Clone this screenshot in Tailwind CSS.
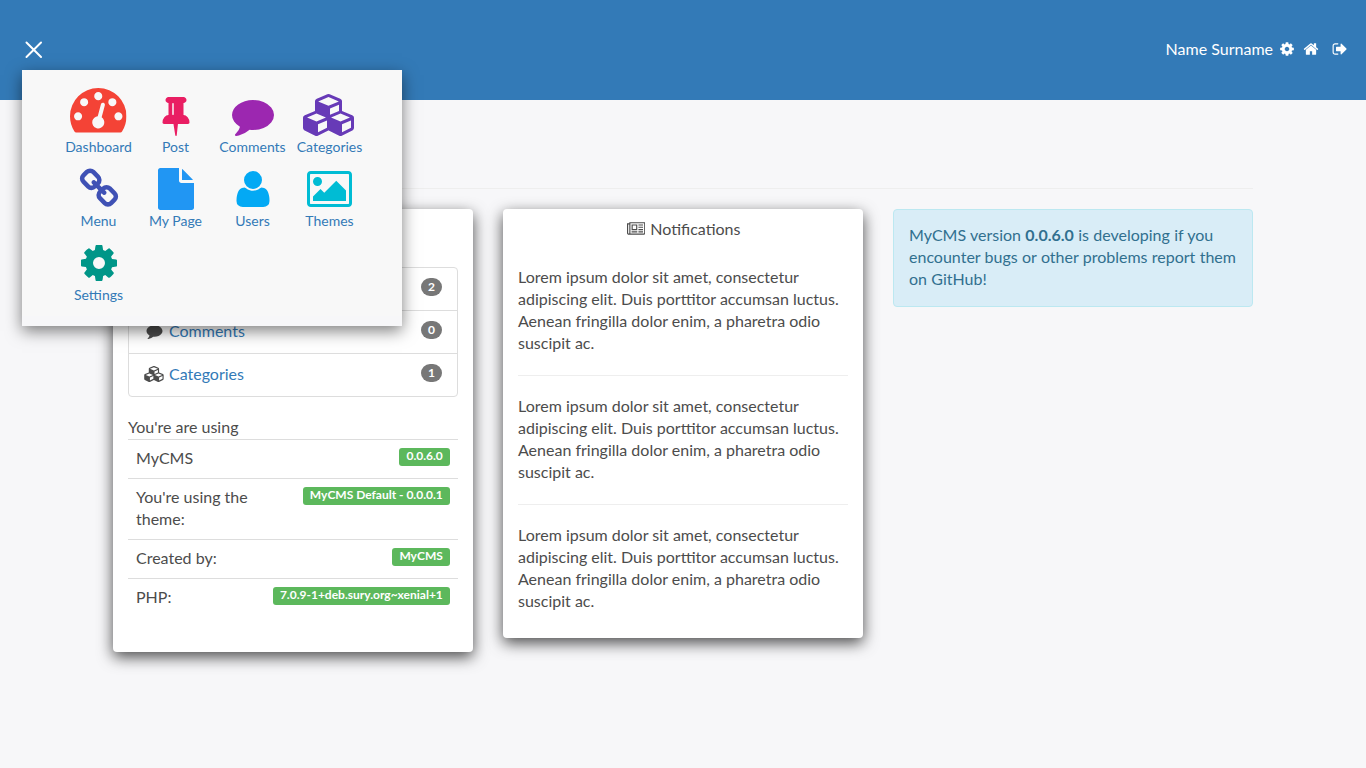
<!DOCTYPE html>
<html lang="en">
<head>
<meta charset="utf-8">
<title>MyCMS</title>
<script src="https://cdn.jsdelivr.net/npm/@tailwindcss/browser@4"></script>
</head>
<body class="h-[768px] overflow-hidden bg-[#f7f7f9] font-['Lato',sans-serif] text-[16px] leading-[22px] text-[#4c4c4c]">
<svg class="hidden">
  <symbol id="dashboard" viewBox="0 0 1792 1792"><path d="M384 1152q0-53-37.5-90.5t-90.5-37.5-90.5 37.5-37.5 90.5 37.5 90.5 90.5 37.5 90.5-37.5 37.5-90.5zm192-448q0-53-37.5-90.5t-90.5-37.5-90.5 37.5-37.5 90.5 37.5 90.5 90.5 37.5 90.5-37.5 37.5-90.5zm428 481l101-382q6-26-7.5-48.5t-38.5-29.5-48 6.5-30 39.5l-101 382q-60 5-107 43.5t-63 98.5q-20 77 20 146t117 89 146-20 89-117q16-60-6-117t-72-91zm660-33q0-53-37.5-90.5t-90.5-37.5-90.5 37.5-37.5 90.5 37.5 90.5 90.5 37.5 90.5-37.5 37.5-90.5zm-640-640q0-53-37.5-90.5t-90.5-37.5-90.5 37.5-37.5 90.5 37.5 90.5 90.5 37.5 90.5-37.5 37.5-90.5zm448 192q0-53-37.5-90.5t-90.5-37.5-90.5 37.5-37.5 90.5 37.5 90.5 90.5 37.5 90.5-37.5 37.5-90.5zm320 448q0 261-141 483-19 29-54 29h-1402q-35 0-54-29-141-221-141-483 0-182 71-348t191-286 286-191 348-71 348 71 286 191 191 286 71 348z"/></symbol>
  <symbol id="pin" viewBox="0 0 1792 1792"><path d="M800 864v-448q0-14-9-23t-23-9-23 9-9 23v448q0 14 9 23t23 9 23-9 9-23zm672 352q0 26-19 45t-45 19h-429l-51 483q-2 12-10.5 20.5t-20.5 8.5h-1q-27 0-32-27l-76-485h-404q-26 0-45-19t-19-45q0-123 78.5-221.5t177.5-98.5v-512q-52 0-90-38t-38-90 38-90 90-38h640q52 0 90 38t38 90-38 90-90 38v512q99 0 177.5 98.5t78.5 221.5z"/></symbol>
  <symbol id="comment" viewBox="0 0 1792 1792"><path d="M1792 896q0 174-120 321.5t-326 233-450 85.5q-70 0-145-8-198 175-460 242-49 14-114 22-17 2-30.5-9t-17.5-29v-1q-3-4-.5-12t2-10 4.5-9.5l6-9 7-8.5 8-9q7-8 31-34.5t34.5-38 31-39.5 32.5-51 27-59 26-76q-157-89-247.5-220t-90.5-281q0-130 71-248.5t191-204.5 286-136.5 348-50.5q244 0 450 85.5t326 233 120 321.5z"/></symbol>
  <symbol id="cubes" viewBox="0 0 2304 1792"><path d="M640 1632l384-192v-314l-384 164v342zm-64-454l404-173-404-173-404 173zm1088 454l384-192v-314l-384 164v342zm-64-454l404-173-404-173-404 173zm-448-293l384-165v-266l-384 164v267zm-64-379l441-189-441-189-441 189zm1088 518v416q0 36-19 67t-52 47l-448 224q-25 14-57 14t-57-14l-448-224q-4-2-7-4-2 2-7 4l-448 224q-25 14-57 14t-57-14l-448-224q-33-16-52-47t-19-67v-416q0-38 21.5-70t56.5-48l434-186v-400q0-38 21.5-70t56.5-48l448-192q23-10 50-10t50 10l448 192q35 16 56.5 48t21.5 70v400l434 186q36 16 57 48t21 70z"/></symbol>
  <symbol id="link" viewBox="0 0 1792 1792"><path d="M1520 1216q0-40-28-68l-208-208q-28-28-68-28-42 0-72 32 3 3 19 18.5t21.5 21.5 15 19 13 25.5 3.5 27.5q0 40-28 68t-68 28q-15 0-27.5-3.5t-25.5-13-19-15-21.5-21.5-18.5-19q-33 31-33 73 0 40 28 68l206 207q27 27 68 27 40 0 68-26l147-146q28-28 28-67zm-703-705q0-40-28-68l-206-207q-28-28-68-28-39 0-68 27l-147 146q-28 28-28 67 0 40 28 68l208 208q27 27 68 27 42 0 72-31-3-3-19-18.5t-21.5-21.5-15-19-13-25.5-3.5-27.5q0-40 28-68t68-28q15 0 27.5 3.5t25.5 13 19 15 21.5 21.5 18.5 19q33-31 33-73zm895 705q0 120-85 203l-147 146q-83 83-203 83-121 0-204-85l-206-207q-83-83-83-203 0-123 88-209l-88-88q-86 88-208 88-120 0-204-84l-208-208q-84-84-84-204t85-203l147-146q83-83 203-83 121 0 204 85l206 207q83 83 83 203 0 123-88 209l88 88q86-88 208-88 120 0 204 84l208 208q84 84 84 204z"/></symbol>
  <symbol id="file" viewBox="0 0 1792 1792"><path d="M1152 512v-472q22 14 36 28l408 408q14 14 28 36h-472zm-128 32q0 40 28 68t68 28h544v1056q0 40-28 68t-68 28h-1344q-40 0-68-28t-28-68v-1600q0-40 28-68t68-28h800v544z"/></symbol>
  <symbol id="user" viewBox="0 0 1792 1792"><path d="M1600 1405q0 120-73 189.5t-194 69.5h-874q-121 0-194-69.5t-73-189.5q0-53 3.5-103.5t14-109 26.5-108.5 43-97.5 62-81 85.5-53.5 111.5-20q9 0 42 21.5t74.5 48 108 48 133.5 21.5 133.5-21.5 108-48 74.5-48 42-21.5q61 0 111.5 20t85.5 53.5 62 81 43 97.5 26.5 108.5 14 109 3.5 103.5zm-320-893q0 159-112.5 271.5t-271.5 112.5-271.5-112.5-112.5-271.5 112.5-271.5 271.5-112.5 271.5 112.5 112.5 271.5z"/></symbol>
  <symbol id="image" viewBox="-64 0 1920 1792"><path d="M576 576q0 80-56 136t-136 56-136-56-56-136 56-136 136-56 136 56 56 136zm1024 384v448h-1408v-192l320-320 160 160 512-512zm96-704h-1600q-13 0-22.5 9.5t-9.5 22.5v1216q0 13 9.5 22.5t22.5 9.5h1600q13 0 22.5-9.5t9.5-22.5v-1216q0-13-9.5-22.5t-22.5-9.5zm160 32v1216q0 66-47 113t-113 47h-1600q-66 0-113-47t-47-113v-1216q0-66 47-113t113-47h1600q66 0 113 47t47 113z"/></symbol>
  <symbol id="cog" viewBox="0 0 1792 1792"><path d="M1152 896q0-106-75-181t-181-75-181 75-75 181 75 181 181 75 181-75 75-181zm512-109v222q0 12-8 23t-20 13l-185 28q-19 54-39 91 35 50 107 138 10 12 10 25t-9 23q-27 37-99 108t-94 71q-12 0-26-9l-138-108q-44 23-91 38-16 136-29 186-7 28-36 28h-222q-14 0-24.5-8.5t-11.5-21.5l-28-184q-49-16-90-37l-141 107q-10 9-25 9-14 0-25-11-126-114-165-168-7-10-7-23 0-12 8-23 15-21 51-66.5t54-70.5q-27-50-41-99l-183-27q-13-2-21-12.5t-8-23.5v-222q0-12 8-23t19-13l186-28q14-46 39-92-40-57-107-138-10-12-10-24 0-10 9-23 26-36 98.5-107.5t94.5-71.5q13 0 26 10l138 107q44-23 91-38 16-136 29-186 7-28 36-28h222q14 0 24.5 8.5t11.5 21.5l28 184q49 16 90 37l142-107q9-9 24-9 13 0 25 10 129 119 165 170 7 8 7 22 0 12-8 23-15 21-51 66.5t-54 70.5q26 50 41 98l183 28q13 2 21 12.5t8 23.5z"/></symbol>
  <symbol id="home" viewBox="0 0 1792 1792"><path d="M1472 992v480q0 26-19 45t-45 19h-384v-384h-256v384h-384q-26 0-45-19t-19-45v-480q0-1 .5-3t.5-3l575-474 575 474q1 2 1 6zm223-69l-62 74q-8 9-21 11h-3q-13 0-21-7l-692-577-692 577q-12 8-24 7-13-2-21-11l-62-74q-8-10-7-23.5t11-21.5l719-599q32-26 76-26t76 26l244 204v-195q0-14 9-23t23-9h192q14 0 23 9t9 23v408l219 182q10 8 11 21.5t-7 23.5z"/></symbol>
  <symbol id="signout" viewBox="0 0 1792 1792"><path d="M704 1440q0 4 1 20t.5 26.5-3 23.5-10 19.5-20.5 6.5h-320q-119 0-203.5-84.5t-84.5-203.5v-704q0-119 84.5-203.5t203.5-84.5h320q13 0 22.5 9.5t9.5 22.5q0 4 1 20t.5 26.5-3 23.5-10 19.5-20.5 6.5h-320q-66 0-113 47t-47 113v704q0 66 47 113t113 47h312l11.5 1 11.5 3 8 5.5 7 9 2 13.5zm928-544q0 26-19 45l-544 544q-19 19-45 19t-45-19-19-45v-288h-448q-26 0-45-19t-19-45v-384q0-26 19-45t45-19h448v-288q0-26 19-45t45-19 45 19l544 544q19 19 19 45z"/></symbol>
  <symbol id="news" viewBox="0 0 2048 1792"><path d="M1024 512h-384v384h384v-384zm128 640v128h-640v-128h640zm0-768v640h-640v-640h640zm640 768v128h-512v-128h512zm0-256v128h-512v-128h512zm0-256v128h-512v-128h512zm0-256v128h-512v-128h512zm-1536 960v-960h-128v960q0 26 19 45t45 19 45-19 19-45zm1664 0v-1088h-1536v1088q0 33-11 64h1483q26 0 45-19t19-45zm128-1216v1216q0 80-56 136t-136 56h-1664q-80 0-136-56t-56-136v-1088h256v-128h1792z"/></symbol>
</svg>

<header class="flex h-[100px] items-center justify-between bg-[#337ab7] pr-[18px] pl-[25px] text-white">
  <svg class="size-[17.5px]" viewBox="0 0 18 18" fill="none" stroke="currentColor" stroke-width="2" stroke-linecap="round"><path d="M1.5 1.5l15 15M16.5 1.5l-15 15"/></svg>
  <div class="flex items-center pb-[2px]">
    <span class="mr-[6px]">Name Surname</span>
    <svg class="mr-2 size-4 fill-current"><use href="#cog"/></svg>
    <svg class="mr-[13px] size-4 fill-current"><use href="#home"/></svg>
    <svg class="size-4 fill-current"><use href="#signout"/></svg>
  </div>
</header>

<main class="mx-auto w-[1140px] pt-[88px]">
  <div class="mb-5 h-px bg-[#eeeeee]"></div>
  <div class="grid grid-cols-3 items-start gap-[30px]">
    <section class="h-[443px] rounded bg-white px-[15px] pt-[58px] shadow-[0_5px_15px_rgba(0,0,0,0.7)]">
      <ul class="mb-[19px] divide-y divide-[#dddddd] rounded border border-[#dddddd]">
        <li class="flex h-[43px] items-start justify-between px-[15px] pt-[9px]">
          <span class="flex"><svg class="mr-1 h-[22px] w-5 fill-current"><use href="#pin"/></svg><span class="text-[#337ab7]">Posts</span></span>
          <span class="mt-[1px] flex h-[18px] w-[21px] justify-center rounded-full bg-[#777777] text-[12px] leading-[18px] font-bold text-white">2</span>
        </li>
        <li class="flex h-[43px] items-start justify-between px-[15px] pt-[9px]">
          <span class="flex items-center"><svg class="mr-1 h-4 w-[21px] fill-current"><use href="#comment"/></svg><span class="text-[#337ab7]">Comments</span></span>
          <span class="mt-[1px] flex h-[18px] w-[21px] justify-center rounded-full bg-[#777777] text-[12px] leading-[18px] font-bold text-white">0</span>
        </li>
        <li class="flex h-[42px] items-start justify-between px-[15px] pt-[9px]">
          <span class="flex items-center"><svg class="mr-1 h-4 w-[21px] fill-current"><use href="#cubes"/></svg><span class="text-[#337ab7]">Categories</span></span>
          <span class="mt-[1px] flex h-[18px] w-[21px] justify-center rounded-full bg-[#777777] text-[12px] leading-[18px] font-bold text-white">1</span>
        </li>
      </ul>
      <p class="mb-px">You're are using</p>
      <dl>
        <div class="flex items-start justify-between border-t border-[#dddddd] px-2 pt-[7px] pb-[9px]"><dt>MyCMS</dt><dd class="mt-px h-[18px] rounded-[3px] bg-[#5cb85c] px-[7.2px] text-[12px] leading-[16px] font-bold text-white">0.0.6.0</dd></div>
        <div class="flex items-start justify-between border-t border-[#dddddd] px-2 pt-[7px] pb-[9px]"><dt class="w-[130px]">You're using the theme:</dt><dd class="mt-px h-[18px] rounded-[3px] bg-[#5cb85c] px-[7.2px] text-[12px] leading-[16px] font-bold text-white">MyCMS Default - 0.0.0.1</dd></div>
        <div class="flex items-start justify-between border-t border-[#dddddd] px-2 pt-[7px] pb-[9px]"><dt>Created by:</dt><dd class="mt-px h-[18px] rounded-[3px] bg-[#5cb85c] px-[7.2px] text-[12px] leading-[16px] font-bold text-white">MyCMS</dd></div>
        <div class="flex items-start justify-between border-t border-[#dddddd] px-2 pt-[7px] pb-[9px]"><dt>PHP:</dt><dd class="mt-px h-[18px] rounded-[3px] bg-[#5cb85c] px-[7.2px] text-[12px] leading-[16px] font-bold text-white">7.0.9-1+deb.sury.org~xenial+1</dd></div>
      </dl>
    </section>

    <section class="h-[429px] rounded bg-white px-[15px] pt-[9px] shadow-[0_5px_15px_rgba(0,0,0,0.7)]">
      <h2 class="mb-[26px] flex items-center justify-center pl-[1.5px]"><svg class="mr-[5px] h-4 w-[18.3px] fill-current"><use href="#news"/></svg>Notifications</h2>
      <p>Lorem ipsum dolor sit amet, consectetur adipiscing elit. Duis porttitor accumsan luctus. Aenean fringilla dolor enim, a pharetra odio suscipit ac.</p>
      <hr class="mt-[21px] mb-[19px] border-[#eeeeee]">
      <p>Lorem ipsum dolor sit amet, consectetur adipiscing elit. Duis porttitor accumsan luctus. Aenean fringilla dolor enim, a pharetra odio suscipit ac.</p>
      <hr class="mt-[21px] mb-[19px] border-[#eeeeee]">
      <p>Lorem ipsum dolor sit amet, consectetur adipiscing elit. Duis porttitor accumsan luctus. Aenean fringilla dolor enim, a pharetra odio suscipit ac.</p>
    </section>

    <aside class="h-[98px] rounded border border-[#bce8f1] bg-[#d9edf7] px-[15px] pt-[14px] text-[#31708f] [word-spacing:0.2px]">MyCMS version <b>0.0.6.0</b> is developing if you encounter bugs or other problems report them on GitHub!</aside>
  </div>
</main>

<nav class="absolute top-[70px] left-[22px] h-[256px] w-[380px] bg-[linear-gradient(#f8f8f8_246px,#f7f7f9_246px)] px-[38px] pt-[13px] text-[14px] leading-5 text-[#337ab7] shadow-[0_5px_15px_rgba(0,0,0,0.5)]">
  <div class="grid w-[308px] auto-rows-[74px] grid-cols-4">
    <a class="flex flex-col items-center justify-end"><svg class="mb-px size-[56.5px] shrink-0 fill-[#f44336]"><use href="#dashboard"/></svg>Dashboard</a>
    <a class="flex flex-col items-center justify-end"><svg class="mb-px size-[42px] fill-[#e91e63]"><use href="#pin"/></svg>Post</a>
    <a class="flex flex-col items-center justify-end"><svg class="mb-px size-[42px] fill-[#9c27b0]"><use href="#comment"/></svg>Comments</a>
    <a class="flex flex-col items-center justify-end"><svg class="mb-px h-[42px] w-[54px] fill-[#673ab7]"><use href="#cubes"/></svg>Categories</a>
    <a class="flex flex-col items-center justify-end"><svg class="mb-px size-[42px] fill-[#3f51b5]"><use href="#link"/></svg>Menu</a>
    <a class="flex flex-col items-center justify-end"><svg class="mb-px size-[42px] fill-[#2196f3]"><use href="#file"/></svg>My Page</a>
    <a class="flex flex-col items-center justify-end"><svg class="mb-px size-[42px] fill-[#03a9f4]"><use href="#user"/></svg>Users</a>
    <a class="flex flex-col items-center justify-end"><svg class="mb-px h-[42px] w-[45px] fill-[#00bcd4]"><use href="#image"/></svg>Themes</a>
    <a class="flex flex-col items-center justify-end"><svg class="mb-px size-[42px] fill-[#009688]"><use href="#cog"/></svg>Settings</a>
  </div>
</nav>
</body>
</html>
